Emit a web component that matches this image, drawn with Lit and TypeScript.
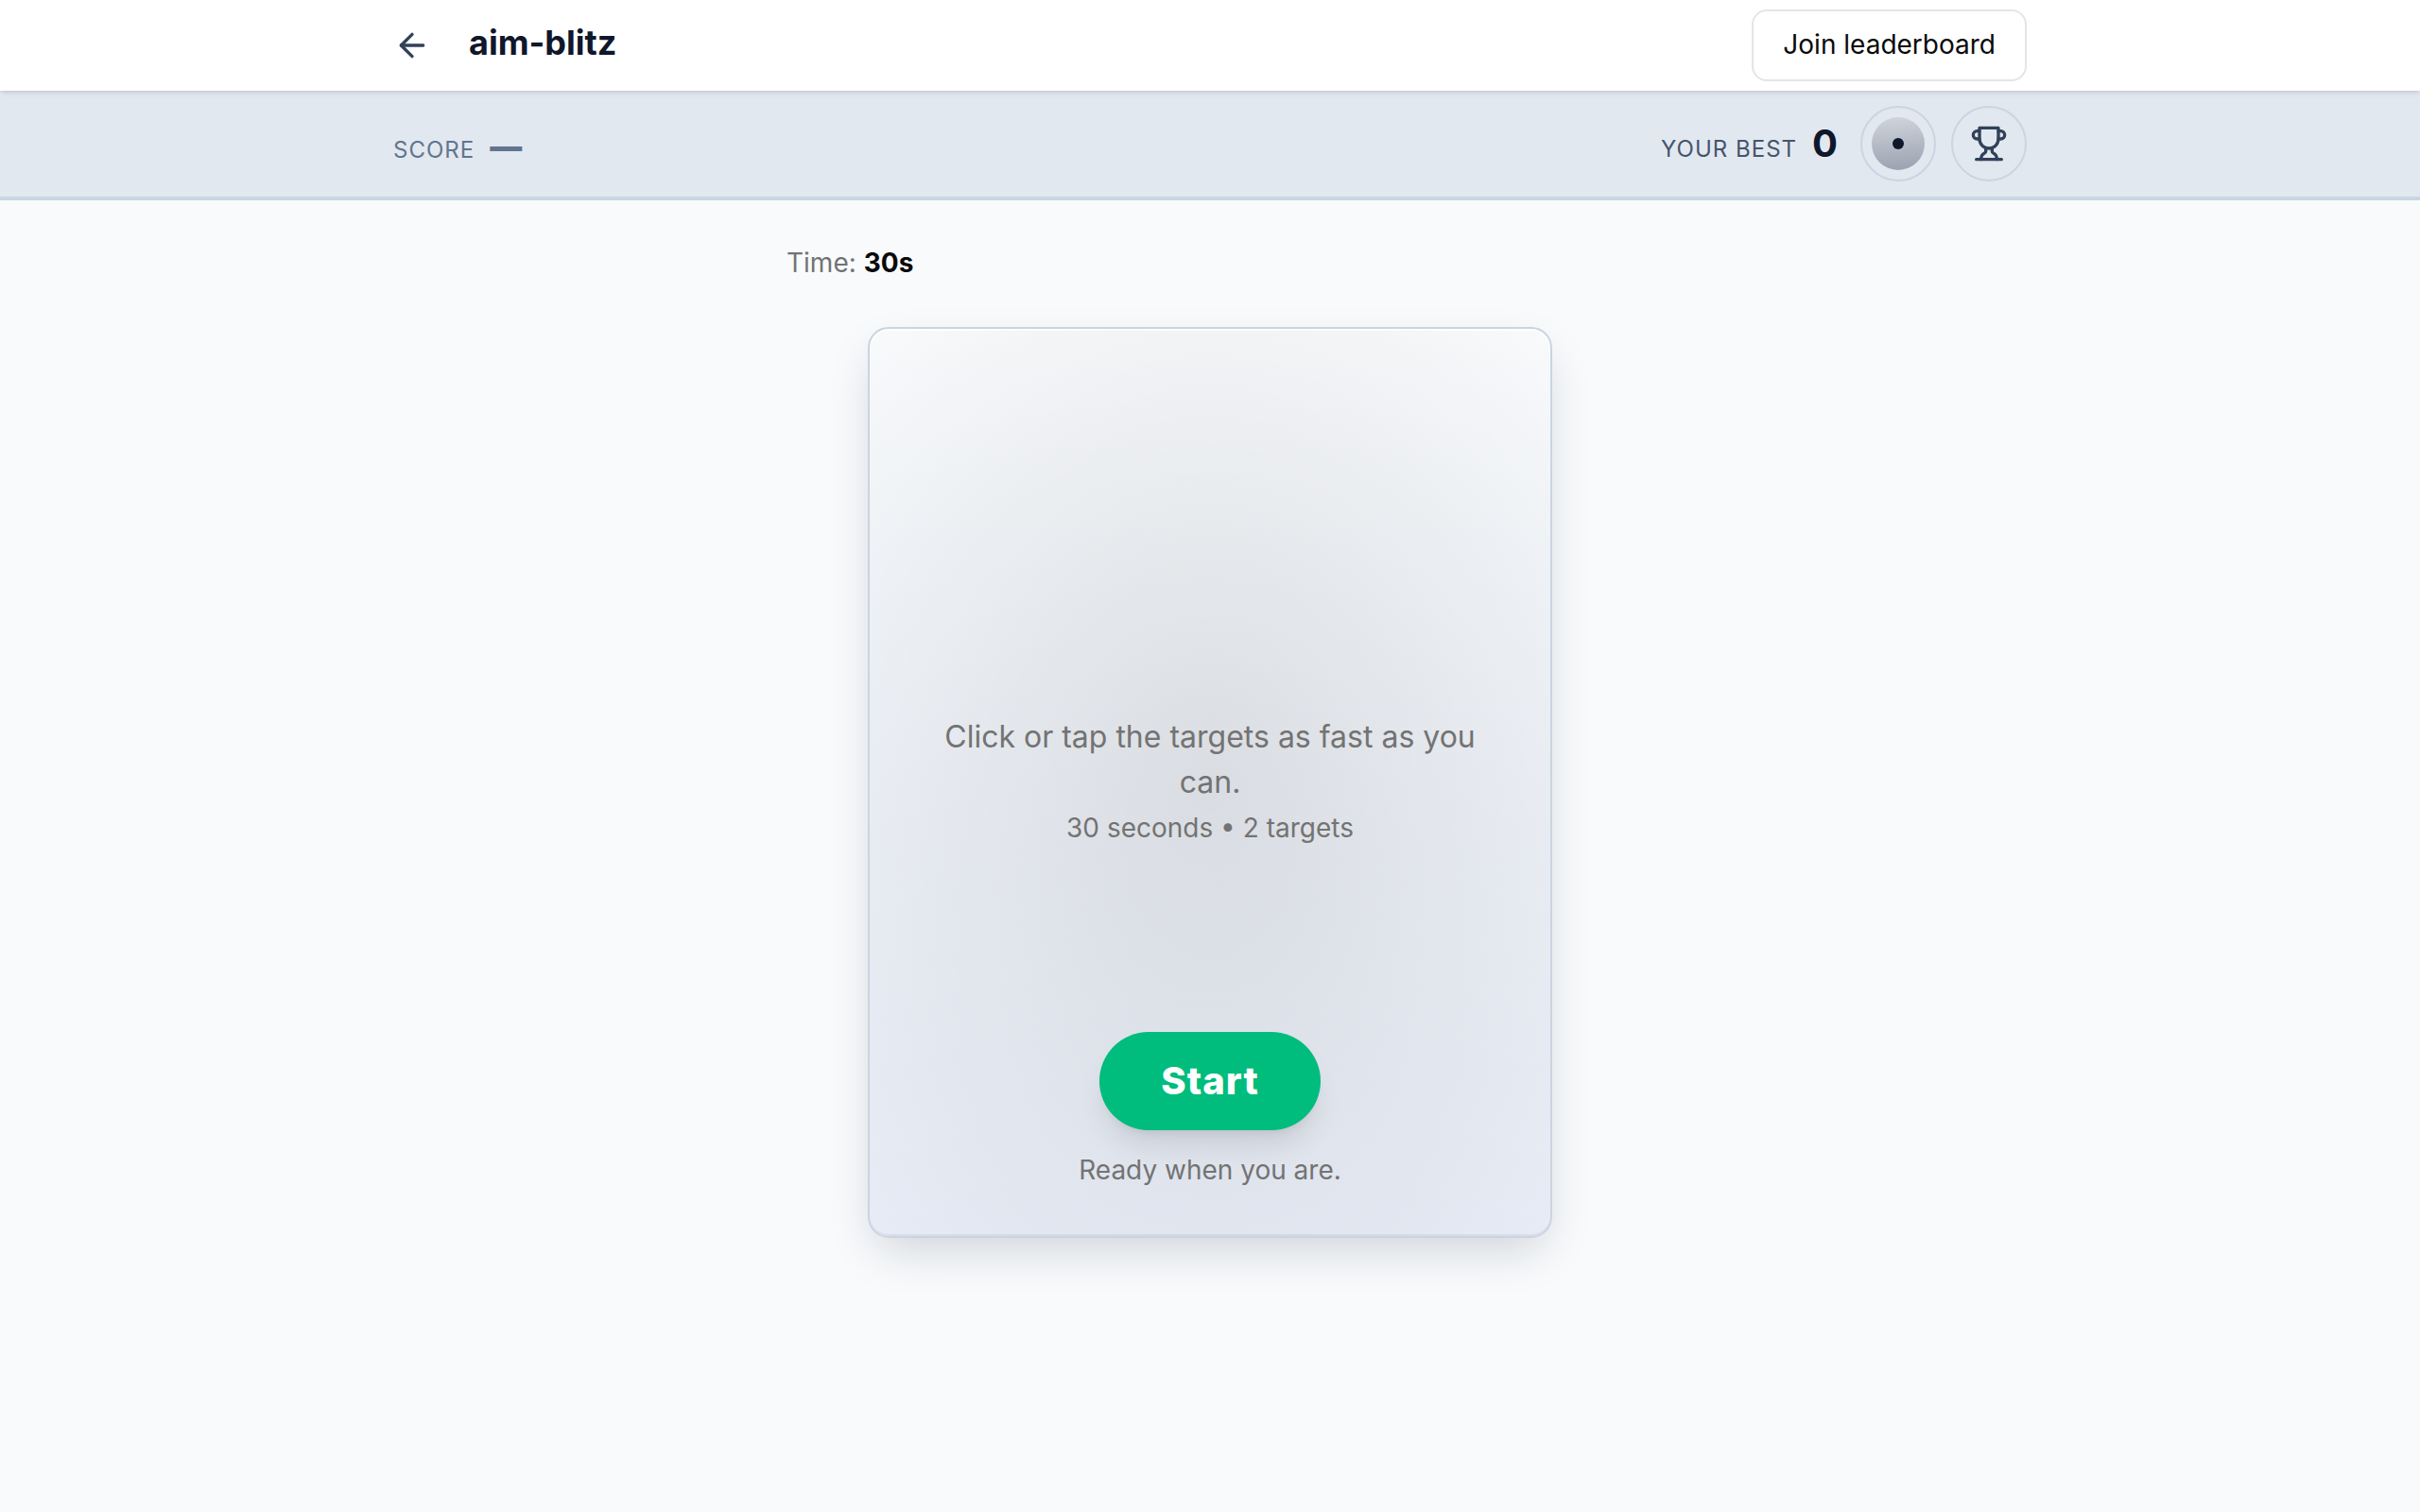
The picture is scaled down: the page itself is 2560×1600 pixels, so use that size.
import { LitElement, html, css, svg } from "lit";
import { customElement, property, state } from "lit/decorators.js";

const arrowLeft = svg`<path d="m12 19-7-7 7-7"/><path d="M19 12H5"/>`;
const trophy = svg`
  <path d="M6 9H4.5a2.5 2.5 0 0 1 0-5H6"/>
  <path d="M18 9h1.5a2.5 2.5 0 0 0 0-5H18"/>
  <path d="M4 22h16"/>
  <path d="M10 14.66V17c0 .55-.47.98-.97 1.21C7.85 18.75 7 20.24 7 22"/>
  <path d="M14 14.66V17c0 .55.47.98.97 1.21C16.15 18.75 17 20.24 17 22"/>
  <path d="M18 2H6v7a6 6 0 0 0 12 0V2Z"/>`;

const icon = (shape: unknown) => html`
  <svg class="icon" viewBox="0 0 24 24" fill="none" stroke="currentColor"
    stroke-width="2" stroke-linecap="round" stroke-linejoin="round" aria-hidden="true">${shape}</svg>`;

const shared = css`
  *, *::before, *::after { box-sizing: border-box; }
  h1, p, dl, dd, dt { margin: 0; }
  button, a { font: inherit; color: inherit; }
  button { cursor: pointer; padding: 0; border: none; background: none; }
  a { text-decoration: none; }
  .icon { display: block; width: 40px; height: 40px; }
  .wrap { width: 100%; max-width: 1792px; margin: 0 auto; padding: 0 32px; }
`;

@customElement("game-header")
class GameHeader extends LitElement {
  @property() name = "";

  static styles = [shared, css`
    :host {
      display: block;
      position: relative;
      z-index: 1;
      background: #fff;
      box-shadow: 0 2px 6px rgb(0 0 0 / 0.1), 0 2px 4px -2px rgb(0 0 0 / 0.1);
    }
    .wrap { display: flex; align-items: center; gap: 40px; height: 96px; }
    a.back { color: #314158; }
    .title { flex: 1; padding-bottom: 6px; font-size: 36px; line-height: 48px; font-weight: 700; color: #0f172b; }
    .join {
      height: 76px;
      padding: 0 31px 2px;
      border: 2px solid #e5e5e5;
      border-radius: 16px;
      background: #fff;
      font-size: 28px;
      line-height: 40px;
      color: #0a0a0a;
    }
  `];

  render() {
    return html`
      <header class="wrap">
        <a class="back" href="#" aria-label="Back">${icon(arrowLeft)}</a>
        <h1 class="title">${this.name}</h1>
        <button class="join" type="button">Join leaderboard</button>
      </header>`;
  }
}

@customElement("score-bar")
class ScoreBar extends LitElement {
  @property() score = "—";
  @property({ type: Number }) best = 0;

  static styles = [shared, css`
    :host { display: block; background: #e2e8f0; border-bottom: 4px solid #cad5e2; }
    .wrap { display: flex; align-items: center; justify-content: space-between; height: 112px; }
    .side { display: flex; align-items: center; gap: 24px; }
    .actions { display: flex; gap: 16px; }
    .stat { display: flex; align-items: baseline; gap: 16px; }
    .label { font-size: 24px; line-height: 32px; letter-spacing: 1px; text-transform: uppercase; color: #62748e; }
    .value { font-size: 40px; line-height: 56px; font-weight: 700; color: #0f172b; }
    .current { padding-top: 6px; }
    .current .value { font-size: 34px; font-weight: 900; color: #62748e; }
    .best .label { color: #45556c; }
    .round {
      display: grid;
      place-items: center;
      width: 80px;
      height: 80px;
      border: 2px solid #cad5e2;
      border-radius: 50%;
      color: #314158;
    }
    .target {
      display: grid;
      place-items: center;
      width: 56px;
      height: 56px;
      border-radius: 50%;
      background: linear-gradient(175deg, #d1d5dc, #99a1af);
    }
    .dot { width: 12px; height: 12px; border-radius: 50%; background: #0f172b; }
  `];

  render() {
    return html`
      <div class="wrap">
        <dl class="stat current">
          <dt class="label">Score</dt>
          <dd class="value">${this.score}</dd>
        </dl>
        <div class="side">
          <dl class="stat best">
            <dt class="label">Your best</dt>
            <dd class="value">${this.best}</dd>
          </dl>
          <div class="actions">
            <button class="round" type="button" aria-label="Target style">
              <span class="target"><span class="dot"></span></span>
            </button>
            <button class="round" type="button" aria-label="Leaderboard">${icon(trophy)}</button>
          </div>
        </div>
      </div>`;
  }
}

@customElement("game-board")
class GameBoard extends LitElement {
  @property({ type: Number }) seconds = 30;
  @property({ type: Number }) targets = 2;

  static styles = [shared, css`
    :host { display: block; padding: 46px 32px; }
    .column { display: flex; flex-direction: column; gap: 48px; max-width: 896px; margin: 0 auto; }
    .time { font-size: 28px; line-height: 40px; color: #737373; }
    .time strong { font-weight: 700; color: #0a0a0a; }
    .board {
      display: grid;
      grid-template-rows: minmax(0, 1fr) auto minmax(0, 1fr);
      width: 100%;
      max-width: 724px;
      aspect-ratio: 181 / 241;
      margin: 0 auto;
      padding: 0 48px;
      border: 2px solid #cbd4e0;
      border-radius: 22px;
      text-align: center;
      color: #737373;
      background:
        radial-gradient(ellipse farthest-corner at center, rgb(0 0 0 / 0.09), transparent),
        linear-gradient(180deg, #f8fafc, #e6ebf5);
      box-shadow:
        inset 0 2px 0 rgb(255 255 255 / 0.7),
        inset 0 -2px 0 rgb(15 23 43 / 0.06),
        0 20px 50px -10px rgb(15 23 43 / 0.18);
    }
    .intro { grid-row: 2; }
    .lead { font-size: 32px; line-height: 48px; }
    .detail, .status { font-size: 28px; line-height: 48px; }
    .footer {
      grid-row: 3;
      display: flex;
      flex-direction: column;
      align-items: center;
      justify-content: flex-end;
      gap: 18px;
      padding-bottom: 46px;
    }
    .start {
      height: 104px;
      padding: 0 65px;
      border-radius: 52px;
      background: #00bc7d;
      color: #fff;
      font-size: 40px;
      line-height: 56px;
      font-weight: 800;
      letter-spacing: 1px;
      box-shadow: 0 20px 30px -6px rgb(0 0 0 / 0.1), 0 8px 12px -8px rgb(0 0 0 / 0.1);
    }
  `];

  render() {
    return html`
      <main class="column">
        <p class="time">Time: <strong>${this.seconds}s</strong></p>
        <section class="board">
          <div class="intro">
            <p class="lead">Click or tap the targets as fast as you can.</p>
            <p class="detail">${this.seconds} seconds • ${this.targets} targets</p>
          </div>
          <div class="footer">
            <button class="start" type="button">Start</button>
            <p class="status">Ready when you are.</p>
          </div>
        </section>
      </main>`;
  }
}

@customElement("app-root")
class AppRoot extends LitElement {
  @state() private game = "aim-blitz";

  static styles = css`
    :host {
      display: block;
      min-height: 100vh;
      background: #f8fafc;
      font-family: Inter, "Liberation Sans", sans-serif;
    }
  `;

  render() {
    return html`
      <game-header name=${this.game}></game-header>
      <score-bar></score-bar>
      <game-board></game-board>`;
  }
}
